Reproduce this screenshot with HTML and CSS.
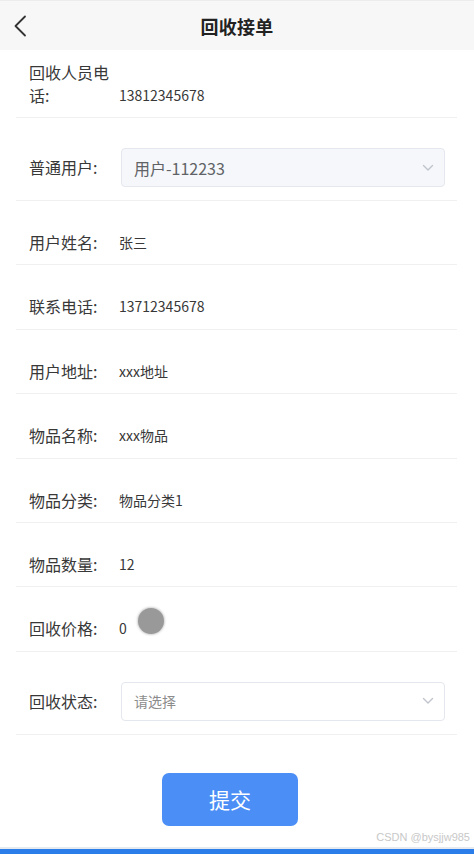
FILE: index.html
```html
<!DOCTYPE html>
<html lang="zh-CN">
<head>
<meta charset="utf-8">
<title>回收接单</title>
<link rel="stylesheet" href="styles.css">
</head>
<body>
<div class="page">
  <header class="navbar">
    <span class="back">
      <svg width="14" height="22" viewBox="0 0 14 22"><path d="M12 1.5 L2.5 11 L12 20.5" fill="none" stroke="#333" stroke-width="1.8" stroke-linecap="round" stroke-linejoin="round"/></svg>
    </span>
    <h1 class="title">回收接单</h1>
  </header>

  <main class="form">
    <div class="row row-first">
      <div class="label label-wrap">回收人员电话:</div>
      <div class="value value-bottom">13812345678</div>
    </div>
    <div class="row row-select">
      <div class="label">普通用户:</div>
      <div class="select select-disabled">
        <span class="select-text">用户-112233</span>
        <svg class="chev" width="12" height="8" viewBox="0 0 12 8"><path d="M1.5 1.5 L6 6 L10.5 1.5" fill="none" stroke="#c0c4cc" stroke-width="1.4" stroke-linecap="round" stroke-linejoin="round"/></svg>
      </div>
    </div>
    <div class="row">
      <div class="label">用户姓名:</div>
      <div class="value">张三</div>
    </div>
    <div class="row">
      <div class="label">联系电话:</div>
      <div class="value">13712345678</div>
    </div>
    <div class="row">
      <div class="label">用户地址:</div>
      <div class="value">xxx地址</div>
    </div>
    <div class="row">
      <div class="label">物品名称:</div>
      <div class="value">xxx物品</div>
    </div>
    <div class="row">
      <div class="label">物品分类:</div>
      <div class="value">物品分类1</div>
    </div>
    <div class="row">
      <div class="label">物品数量:</div>
      <div class="value">12</div>
    </div>
    <div class="row">
      <div class="label">回收价格:</div>
      <div class="value value-price"><span>0</span><span class="dot"></span></div>
    </div>
    <div class="row row-select">
      <div class="label">回收状态:</div>
      <div class="select">
        <span class="select-placeholder">请选择</span>
        <svg class="chev" width="12" height="8" viewBox="0 0 12 8"><path d="M1.5 1.5 L6 6 L10.5 1.5" fill="none" stroke="#c0c4cc" stroke-width="1.4" stroke-linecap="round" stroke-linejoin="round"/></svg>
      </div>
    </div>
    <div class="actions">
      <button class="submit" type="button">提交</button>
    </div>
  </main>

  <footer class="footer">
    <span class="watermark">CSDN @bysjjw985</span>
    <div class="bluebar"></div>
  </footer>
</div>
</body>
</html>
```
FILE: styles.css
```css
* { box-sizing: border-box; }
html, body { margin: 0; padding: 0; background: #fff; }
body {
  font-family: "Noto Sans CJK SC", "Noto Sans", sans-serif;
  color: #333;
  width: 474px;
  height: 854px;
  overflow: hidden;
}
.page {
  height: 854px;
  display: flex;
  flex-direction: column;
}
.navbar {
  height: 50px;
  background: #f7f7f7;
  border-top: 1px solid #ececec;
  display: flex;
  align-items: center;
  justify-content: center;
  position: relative;
  flex: none;
}
.back {
  position: absolute;
  left: 13px;
  top: 14px;
  display: block;
  line-height: 0;
}
.title {
  margin: 0;
  font-size: 18px;
  font-weight: 700;
  color: #222;
  letter-spacing: 0.3px;
}
.form {
  padding: 0 17px 0 16px;
  flex: 1;
}
.row {
  display: flex;
  align-items: center;
  padding: 30px 12px 11px 13px;
  border-bottom: 1px solid #f0f0f0;
}
.row-first {
  padding-top: 11px;
  padding-bottom: 10px;
  align-items: flex-end;
}
.row-select {
  padding-bottom: 13px;
}
.label {
  width: 90px;
  flex: none;
  font-size: 16px;
  line-height: 22.4px;
  color: #383838;
  padding-right: 8px;
}
.label-wrap {
  line-height: 23px;
}
.value {
  font-size: 14px;
  line-height: 22.4px;
  color: #383838;
}
.value-bottom {
  line-height: 23px;
}
.value-price {
  display: flex;
  align-items: flex-start;
}
.dot {
  width: 26px;
  height: 26px;
  border-radius: 50%;
  background: #999;
  box-shadow: 0 0 2px 1px rgba(150,150,150,0.45);
  margin: -9px 0 0 11px;
}
.select {
  flex: 1;
  margin-left: 2px;
  height: 39px;
  border: 1px solid #e4e7ed;
  border-radius: 4px;
  background: #fff;
  display: flex;
  align-items: center;
  justify-content: space-between;
  padding: 0 10px 0 12px;
}
.select-disabled {
  background: #f5f7fa;
}
.select-text {
  font-size: 16px;
  color: #606266;
}
.select-placeholder {
  font-size: 14px;
  color: #8c8c8c;
}
.chev { display: block; }
.actions {
  padding: 38px 0 0 146px;
}
.submit {
  width: 136px;
  height: 53px;
  border: 0;
  border-radius: 7px;
  background: #4b8ff6;
  color: #fff;
  font-family: "Noto Sans CJK SC", "Noto Sans", sans-serif;
  font-size: 21px;
  padding: 0;
  display: block;
}
.footer {
  flex: none;
  display: flex;
  flex-direction: column;
  align-items: flex-end;
}
.watermark {
  font-family: "Liberation Sans", Arial, sans-serif;
  font-size: 11px;
  line-height: 14px;
  color: #c8c8c8;
  padding-right: 4px;
  margin-bottom: 3px;
}
.bluebar {
  align-self: stretch;
  height: 7px;
  border-top: 2px solid #e6e9ee;
  background: #2b7de9;
}
```
